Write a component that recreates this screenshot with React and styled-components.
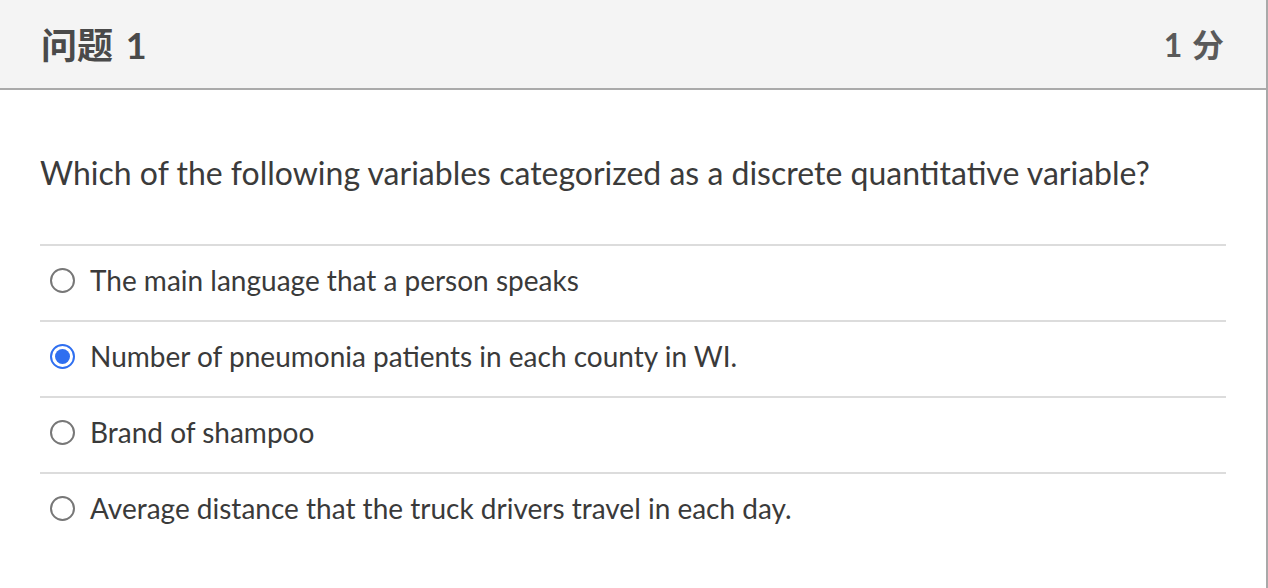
import React from "react";
import styled, { createGlobalStyle } from "styled-components";

const Global = createGlobalStyle`
  html, body { margin: 0; padding: 0; background: #ffffff; }
  body { font-family: Lato, "Noto Sans CJK SC", sans-serif; }
`;

const Card = styled.div`
  width: 1266px;
  height: 588px;
  border-right: 2px solid #a9a9a9;
  background: #ffffff;
  overflow: hidden;
`;

const Header = styled.div`
  height: 90px;
  box-sizing: border-box;
  background: #f4f4f4;
  border-bottom: 2px solid #aaaaaa;
  display: flex;
  align-items: center;
  justify-content: space-between;
  padding: 0 42px 2px 41px;
  font-family: Lato, "Noto Sans CJK SC", sans-serif;
  font-weight: 700;
`;

const Title = styled.div`
  font-size: 36px;
  color: #4a4a4a;
  word-spacing: 4px;
`;

const Points = styled.div`
  font-size: 32px;
  color: #5a5a5a;
  word-spacing: 2px;
`;

const Body = styled.div`
  padding: 0 40px;
`;

const Question = styled.p`
  margin: 63px 0 51px;
  font-size: 32px;
  line-height: 40px;
  color: #3b3b3b;
`;

const Options = styled.div`
  display: flex;
  flex-direction: column;
`;

const Row = styled.label`
  display: flex;
  align-items: center;
  gap: 15px;
  height: 76px;
  box-sizing: border-box;
  border-top: 2px solid #dcdcdc;
  padding: 0 0 6px 10px;
  font-size: 28px;
  color: #3a3a3a;
`;

const Radio = styled.span`
  width: 25px;
  height: 25px;
  box-sizing: border-box;
  border-radius: 50%;
  border: 2px solid ${(p) => (p.$checked ? "#2f6ff0" : "#777777")};
  background: #ffffff;
  display: flex;
  align-items: center;
  justify-content: center;
  flex: none;
  &::after {
    content: "";
    width: 15px;
    height: 15px;
    border-radius: 50%;
    background: #2f6ff0;
    display: ${(p) => (p.$checked ? "block" : "none")};
  }
`;

const options = [
  { text: "The main language that a person speaks", checked: false },
  { text: "Number of pneumonia patients in each county in WI.", checked: true },
  { text: "Brand of shampoo", checked: false },
  { text: "Average distance that the truck drivers travel in each day.", checked: false },
];

export default function App() {
  return (
    <>
      <Global />
      <Card>
        <Header>
          <Title>问题 1</Title>
          <Points>1 分</Points>
        </Header>
        <Body>
          <Question>
            Which of the following variables categorized as a discrete quantitative variable?
          </Question>
          <Options>
            {options.map((o) => (
              <Row key={o.text}>
                <Radio $checked={o.checked} />
                <span>{o.text}</span>
              </Row>
            ))}
          </Options>
        </Body>
      </Card>
    </>
  );
}
